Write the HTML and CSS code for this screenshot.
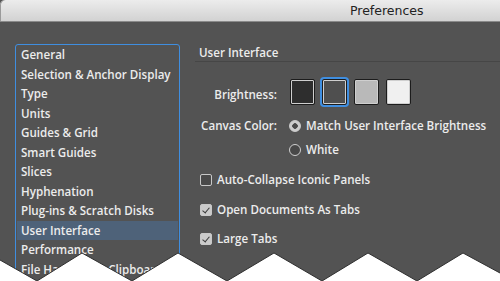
FILE: index.html
```html
<!DOCTYPE html>
<html lang="en">
<head>
    <meta charset="UTF-8">
    <title>Preferences</title>
    <link rel="stylesheet" href="styles.css">
</head>
<body>
    <div class="window">
        <header class="titlebar">Preferences</header>

        <div class="content">
            <ul class="sections">
                <li>General</li>
                <li>Selection &amp; Anchor Display</li>
                <li>Type</li>
                <li>Units</li>
                <li>Guides &amp; Grid</li>
                <li>Smart Guides</li>
                <li>Slices</li>
                <li>Hyphenation</li>
                <li>Plug-ins &amp; Scratch Disks</li>
                <li class="active">User Interface</li>
                <li>Performance</li>
                <li>File Handling &amp; Clipboard</li>
            </ul>

            <section class="panel">
                <h2>User Interface</h2>

                <div class="row brightness">
                    <span class="label">Brightness:</span>
                    <div class="swatches">
                        <span class="swatch darkest"></span>
                        <span class="swatch dark selected"></span>
                        <span class="swatch light"></span>
                        <span class="swatch lightest"></span>
                    </div>
                </div>

                <div class="row canvas">
                    <span class="label">Canvas Color:</span>
                    <div class="radios">
                        <label class="option"><span class="radio checked"></span>Match User Interface Brightness</label>
                        <label class="option"><span class="radio"></span>White</label>
                    </div>
                </div>

                <div class="checks">
                    <label class="option"><span class="checkbox"></span>Auto-Collapse Iconic Panels</label>
                    <label class="option"><span class="checkbox checked"></span>Open Documents As Tabs</label>
                    <label class="option"><span class="checkbox checked"></span>Large Tabs</label>
                </div>
            </section>
        </div>

        <!-- torn edge over the bottom of the window -->
        <svg class="torn" width="500" height="31" viewBox="0 250 500 31">
            <polygon points="0,260 37,281 82,253 132,281 178,253 227,281 274,253 322,281 368,253 417,281 463,253 500,273 500,281 0,281" fill="#fff"/>
            <polyline points="0,260 37,281 82,253 132,281 178,253 227,281 274,253 322,281 368,253 417,281 463,253 500,273" fill="none" stroke="#2f2f2f" stroke-width="1"/>
        </svg>
    </div>
</body>
</html>
```

FILE: styles.css
```css
:root {
    --bg: #535353;
    --text: #ececec;
    --blue: #3f8ee0;
}

body {
    margin: 0;
    background: #fff;
    font-family: 'Open Sans', sans-serif;
}

.window {
    position: relative;
    width: 500px;
    height: 281px;
    overflow: hidden;
    background: var(--bg);
    color: var(--text);
    font-size: 11.6px;
    font-weight: 600;
}

.titlebar {
    height: 21px;
    line-height: 22px;
    padding-left: 350px;
    background: linear-gradient(#ececec, #d2d2d2);
    border-bottom: 1px solid #8a8a8a;
    border-top-left-radius: 5px;
    box-shadow: inset 1px 0 0 #9a9a9a;
    color: #222;
    font-family: 'DejaVu Sans', sans-serif;
    font-size: 12.5px;
    font-weight: normal;
}

.content {
    display: flex;
}

/* Список разделов */
.sections {
    list-style: none;
    margin: 22px 0 0 15px;
    padding: 0 1px;
    width: 161px;
    height: 260px;
    border: 1px solid var(--blue);
    border-radius: 3px;
    flex-shrink: 0;
}

.sections li {
    height: 19.5px;
    line-height: 19.5px;
    padding-left: 4px;
    white-space: nowrap;
}

.sections li.active {
    background: #4e6279;
}

/* Правая панель */
.panel {
    flex: 1;
    margin-left: 15px;
    padding-top: 23px;
}

.panel h2 {
    margin: 0;
    padding-left: 4px;
    height: 16px;
    line-height: 16px;
    font-size: 11.6px;
    font-weight: 600;
    border-bottom: 1px solid #464646;
}

.row {
    display: flex;
}

.label {
    width: 82px;
    text-align: right;
    line-height: 16px;
    flex-shrink: 0;
}

.brightness {
    margin-top: 17px;
    align-items: flex-end;
}

.brightness .label {
    margin-bottom: 2px;
}

.swatches {
    display: flex;
    gap: 7px;
    margin-left: 13px;
}

.swatch {
    width: 23px;
    height: 24px;
    border: 1px solid #1c1c1c;
    border-radius: 2px;
    box-shadow: inset 0 0 0 1px #cfcfcf;
}

.swatch.darkest { background: #2e2e2e; }
.swatch.dark { background: #4f4f4f; }
.swatch.light { background: #b9b9b9; }
.swatch.lightest { background: #f0f0f0; }

.swatch.selected {
    outline: 2px solid var(--blue);
    outline-offset: 0;
}

.canvas {
    margin-top: 13px;
}

.radios {
    display: flex;
    flex-direction: column;
    gap: 8px;
    margin-left: 12px;
}

.option {
    display: flex;
    align-items: center;
    height: 16px;
    line-height: 16px;
    white-space: nowrap;
}

.radio {
    width: 10px;
    height: 10px;
    border: 1px solid #cfcfcf;
    border-radius: 50%;
    margin-right: 5px;
    background: #484848;
    flex-shrink: 0;
}

.radio.checked {
    background: radial-gradient(circle, #4a4a4a 0 2.5px, #cdcdcd 3px);
    border-color: #cdcdcd;
}

.checks {
    display: flex;
    flex-direction: column;
    gap: 13.5px;
    margin: 14px 0 0 5px;
}

.checkbox {
    position: relative;
    width: 10px;
    height: 10px;
    border: 1px solid #c8c8c8;
    border-radius: 2px;
    margin-right: 5px;
    background: #4a4a4a;
    flex-shrink: 0;
}

.checkbox.checked {
    background: #cbcbcb;
}

.checkbox.checked::after {
    content: "";
    position: absolute;
    left: 3px;
    top: 1px;
    width: 3px;
    height: 6px;
    border: solid #3a3a3a;
    border-width: 0 1.5px 1.5px 0;
    transform: rotate(40deg);
}

.torn {
    position: absolute;
    left: 0;
    bottom: 0;
    display: block;
}
```
